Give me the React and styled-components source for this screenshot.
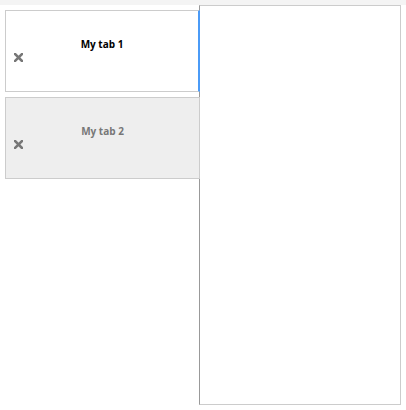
import React, { useState } from 'react'
import styled, { createGlobalStyle } from 'styled-components'

const GlobalStyle = createGlobalStyle`
  body {
    margin: 0;
    background: #ffffff;
    font-family: "Open Sans", "Liberation Sans", sans-serif;
  }
`

const TopStrip = styled.div`
  height: 5px;
  background: #f4f4f4;
`

const Layout = styled.div`
  display: flex;
  align-items: flex-start;
`

const TabList = styled.ul`
  list-style: none;
  margin: 0;
  padding: 5px 0 0 5px;
  width: 195px;
  display: flex;
  flex-direction: column;
  gap: 5px;
  position: relative;
  z-index: 1;
`

const TabItem = styled.li`
  box-sizing: border-box;
  height: 82px;
  width: 195px;
  padding-top: 26px;
  border: 1px solid #cccccc;
  border-right: ${props => (props.active ? '2px solid #4b9bf7' : '1px solid #cccccc')};
  background-color: ${props => (props.active ? '#ffffff' : '#eeeeee')};
  color: ${props => (props.active ? '#000000' : '#777777')};
  cursor: pointer;
  display: flex;
  flex-direction: column;
`

const TabTitle = styled.span`
  font-size: 10px;
  font-weight: 700;
  line-height: 14px;
  text-align: center;
`

const CloseButton = styled.button`
  align-self: flex-start;
  margin: 1px 0 0 7px;
  padding: 0;
  border: 0;
  background: transparent;
  width: 10px;
  height: 10px;
  display: flex;
  align-items: center;
  justify-content: center;
  cursor: pointer;
`

const Panel = styled.div`
  box-sizing: border-box;
  width: 202px;
  height: 400px;
  margin-left: -1px;
  border: 1px solid #cccccc;
  border-left-color: #999999;
  background: #ffffff;
`

const CloseIcon = () => (
  <svg width="9" height="9" viewBox="0 0 9 9">
    <path d="M1 1 L8 8 M8 1 L1 8" stroke="#777777" strokeWidth="2.5" strokeLinecap="square" />
  </svg>
)

export default function App() {
  const [active, setActive] = useState(0)
  const tabs = ['My tab 1', 'My tab 2']

  return (
    <>
      <GlobalStyle />
      <TopStrip />
      <Layout>
        <TabList>
          {tabs.map((title, i) => (
            <TabItem key={title} active={i === active} onClick={() => setActive(i)}>
              <TabTitle>{title}</TabTitle>
              <CloseButton aria-label="Close tab">
                <CloseIcon />
              </CloseButton>
            </TabItem>
          ))}
        </TabList>
        <Panel />
      </Layout>
    </>
  )
}
